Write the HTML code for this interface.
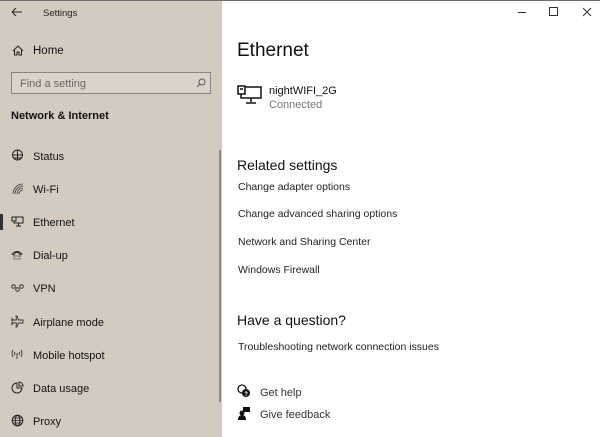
<!DOCTYPE html>
<html><head><meta charset="utf-8"><style>
*{margin:0;padding:0;box-sizing:border-box}
body{width:600px;height:437px;overflow:hidden;font-family:"Liberation Sans",sans-serif;background:#fff;position:relative;color:#000}
#side{position:absolute;left:0;top:0;width:222px;height:437px;background:#d3cbc0}
#topline{position:absolute;left:0;top:0;width:600px;height:1px;background:#6e6e6e}
.t{position:absolute;white-space:nowrap;margin-top:1px}
.ic{position:absolute}
.nav{font-size:11px;color:#111}
.r{font-size:10.5px;color:#222}
</style></head><body>
<div id="side"></div>
<div id="topline"></div>
<svg class="ic" style="left:11px;top:7px" width="12" height="10"><path d="M1 5H11M1 5L5 1M1 5L5 9" stroke="#222" fill="none" stroke-width="1"/></svg>
<div class="t" style="left:43px;top:7px;font-size:9.5px;color:#222">Settings</div>
<svg class="ic" style="left:12px;top:45px" width="12" height="11"><path d="M1 6L6 1L11 6M2.5 4.5V10H5V7H7V10H9.5V4.5" stroke="#222" fill="none"/></svg>
<div class="t nav" style="left:33px;top:44px;font-size:11.5px">Home</div>
<div style="position:absolute;left:11px;top:72px;width:200px;height:22px;border:1.5px solid #8a8580;background:#d9d3ca"></div>
<div class="t" style="left:20px;top:77px;font-size:11px;color:#6b6660">Find a setting</div>
<svg class="ic" style="left:196px;top:78px" width="10" height="10"><circle cx="6" cy="4" r="3" stroke="#555" fill="none"/><path d="M4 6L1 9" stroke="#555"/></svg>
<div class="t" style="left:11px;top:109px;font-size:11px;font-weight:bold;color:#111">Network &amp; Internet</div>
<div style="position:absolute;left:219px;top:150px;width:2px;height:252px;background:#8e8a85"></div>
<div style="position:absolute;left:0;top:214px;width:3px;height:16px;background:#333"></div>
<svg class="ic" style="left:11px;top:149px" width="13" height="13"><circle cx="6.5" cy="6" r="5" stroke="#222" fill="none"/><path d="M1.5 6H11.5M6.5 1V11M3 9H10" stroke="#222"/></svg>
<div class="t nav" style="left:33px;top:150px">Status</div>
<svg class="ic" style="left:12px;top:183px" width="12" height="12"><path d="M1 11A10 10 0 0 1 11 1M3 11A8 8 0 0 1 11 3M5 11A6 6 0 0 1 11 5M7 11A4 4 0 0 1 11 7" stroke="#333" fill="none" stroke-width="0.8"/></svg>
<div class="t nav" style="left:33px;top:183px">Wi-Fi</div>
<svg class="ic" style="left:11px;top:216px" width="13" height="11"><rect x="3" y="1" width="9" height="6" stroke="#222" fill="none"/><rect x="1" y="1" width="4" height="4" stroke="#222" fill="#d3cbc0"/><path d="M7.5 7V10M5 10H10" stroke="#222"/></svg>
<div class="t nav" style="left:33px;top:216px">Ethernet</div>
<svg class="ic" style="left:11px;top:250px" width="12" height="10"><path d="M1 4Q6 -1 11 4L9 5L8 3Q6 2 4 3L3 5Z" stroke="#333" fill="none"/><path d="M3 6H9V9H3Z" stroke="#777" fill="none"/></svg>
<div class="t nav" style="left:33px;top:249px">Dial-up</div>
<svg class="ic" style="left:11px;top:284px" width="13" height="8"><circle cx="2.5" cy="2.5" r="1.8" stroke="#333" fill="none"/><circle cx="10.5" cy="2.5" r="1.8" stroke="#333" fill="none"/><circle cx="6.5" cy="5.5" r="1.8" stroke="#333" fill="none"/></svg>
<div class="t nav" style="left:33px;top:282px">VPN</div>
<svg class="ic" style="left:11px;top:315px" width="13" height="13"><path d="M6 1L7.5 5H12V8H7.5L6 12H5L5.5 8H2L1 9.5V3.5L2 5H5.5L5 1Z" stroke="#333" fill="none" stroke-width="0.9"/></svg>
<div class="t nav" style="left:33px;top:316px">Airplane mode</div>
<svg class="ic" style="left:10px;top:349px" width="14" height="11"><path d="M3 1Q1 4 3 8M11 1Q13 4 11 8M5 3Q4 4.5 5 6M9 3Q10 4.5 9 6M7 4V10" stroke="#333" fill="none" stroke-width="0.9"/></svg>
<div class="t nav" style="left:33px;top:349px">Mobile hotspot</div>
<svg class="ic" style="left:11px;top:381px" width="13" height="13"><path d="M6 2A5 5 0 1 0 11 7H6Z" stroke="#222" fill="none"/><path d="M8 1V5H12A4 4 0 0 0 8 1Z" stroke="#222" fill="none"/></svg>
<div class="t nav" style="left:33px;top:382px">Data usage</div>
<svg class="ic" style="left:11px;top:414px" width="13" height="13"><circle cx="6.5" cy="6.5" r="5.3" stroke="#222" fill="none"/><ellipse cx="6.5" cy="6.5" rx="2.3" ry="5.3" stroke="#222" fill="none"/><path d="M1.2 6.5H11.8M2 4H11M2 9H11" stroke="#222" stroke-width="0.8"/></svg>
<div class="t nav" style="left:33px;top:415px">Proxy</div>
<div style="position:absolute;left:518px;top:12px;width:8px;height:1px;background:#333"></div>
<div style="position:absolute;left:549px;top:7px;width:9px;height:9px;border:1px solid #333"></div>
<svg class="ic" style="left:582px;top:7px" width="10" height="10"><path d="M1 1L9 9M9 1L1 9" stroke="#333"/></svg>
<div class="t" style="left:237px;top:39px;font-size:19px;color:#111">Ethernet</div>
<svg class="ic" style="left:237px;top:85px" width="26" height="20"><rect x="4" y="2" width="20" height="11" stroke="#111" fill="none" stroke-width="1.5"/><rect x="1" y="1" width="7" height="8" stroke="#111" fill="#fff" stroke-width="1.5"/><path d="M3 4H6M14 13V17M9 18H19" stroke="#111" stroke-width="1.5"/></svg>
<div class="t" style="left:269px;top:84px;font-size:11px;color:#111">nightWIFI_2G</div>
<div class="t" style="left:269px;top:98px;font-size:11px;color:#777">Connected</div>
<div class="t" style="left:237px;top:156px;font-size:14px;color:#111">Related settings</div>
<div class="t r" style="left:238px;top:180px">Change adapter options</div>
<div class="t r" style="left:238px;top:207px">Change advanced sharing options</div>
<div class="t r" style="left:238px;top:235px">Network and Sharing Center</div>
<div class="t r" style="left:238px;top:263px">Windows Firewall</div>
<div class="t" style="left:237px;top:311px;font-size:14px;color:#111">Have a question?</div>
<div class="t r" style="left:238px;top:340px">Troubleshooting network connection issues</div>
<svg class="ic" style="left:237px;top:384px" width="14" height="14"><circle cx="5" cy="5" r="4" stroke="#111" fill="none" stroke-width="1.3"/><circle cx="9" cy="9" r="4" fill="#111"/><text x="7.3" y="12" font-size="6" fill="#fff" font-family="Liberation Sans" font-weight="bold">?</text></svg>
<div class="t" style="left:260px;top:386px;font-size:11px;color:#333">Get help</div>
<svg class="ic" style="left:238px;top:406px" width="13" height="14"><rect x="5" y="1" width="7" height="5" fill="#111"/><circle cx="4" cy="7" r="2.5" fill="#111"/><path d="M0 14Q0 9 4 9Q8 9 8 14Z" fill="#111"/></svg>
<div class="t" style="left:260px;top:408px;font-size:11px;color:#333">Give feedback</div>
</body></html>
